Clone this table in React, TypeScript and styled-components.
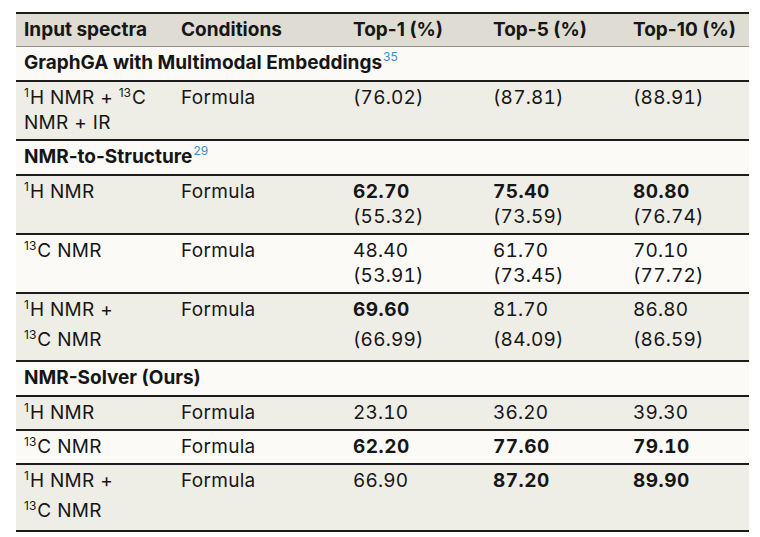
import React from "react";
import styled, { createGlobalStyle } from "styled-components";

const GlobalStyle = createGlobalStyle`
  html, body { margin: 0; padding: 0; background: #ffffff; }
  body { font-family: Inter, "Noto Sans", "Liberation Sans", sans-serif; color: #161616; }
`;

const Page = styled.div`
  padding: 12px 11px 0 16px;
`;

const Table = styled.div`
  width: 733px;
  border-top: 2px solid #1c1c1c;
  font-size: 19px;
`;

const COLS = "157px 172px 140px 140px 1fr";

const HeaderRow = styled.div`
  display: grid;
  grid-template-columns: ${COLS};
  background: #dedcd3;
  border-bottom: 1px solid #8f8e88;
  font-weight: 700;
`;

const SectionRow = styled.div`
  background: #fbfaf7;
  border-bottom: 2px solid #1c1c1c;
  font-weight: 700;
  padding: 4px 8px 5px;
  line-height: 24px;
  white-space: nowrap;
`;

const DataRow = styled.div<{ $shade: boolean; $tail: number }>`
  display: grid;
  grid-template-columns: ${COLS};
  background: ${(p) => (p.$shade ? "#eeede6" : "#fbfaf7")};
  border-bottom: 2px solid #1c1c1c;
  padding-bottom: ${(p) => p.$tail}px;
`;

const Cell = styled.div`
  padding: 3px 8px 4px;
  line-height: 25px;
`;

const HeadCell = styled.div`
  padding: 4px 8px 4px;
  line-height: 24px;
  white-space: nowrap;
`;

const Line = styled.div<{ $drop?: boolean }>`
  letter-spacing: 0.3px;
  padding-top: ${(p) => (p.$drop ? 5 : 0)}px;
  white-space: nowrap;
`;

const Num = styled.div<{ $bold?: boolean; $drop?: boolean }>`
  font-weight: ${(p) => (p.$bold ? 700 : 400)};
  font-variant-numeric: tabular-nums;
  letter-spacing: ${(p) => (p.$bold ? "0.5px" : "0.2px")};
  padding-top: ${(p) => (p.$drop ? 5 : 0)}px;
  white-space: nowrap;
`;

const Iso = styled.sup`
  font-size: 12px;
  letter-spacing: 0;
  line-height: 0;
  vertical-align: 0;
  position: relative;
  top: -7px;
  margin-right: 1px;
`;

const Ref = styled.sup`
  font-size: 12px;
  line-height: 0;
  vertical-align: 0;
  position: relative;
  top: -8px;
  font-weight: 400;
  color: #3a8ccb;
  margin-left: 1px;
`;

const H1 = () => (
  <>
    <Iso>1</Iso>H
  </>
);
const C13 = () => (
  <>
    <Iso>13</Iso>C
  </>
);

type Val = { t: string; b?: boolean };
type Row = {
  spectra: React.ReactNode[];
  drop?: boolean;
  shade: boolean;
  tail?: number;
  vals: Val[][];
};
type Section = { title: string; ref?: string; rows: Row[] };

const sections: Section[] = [
  {
    title: "GraphGA with Multimodal Embeddings",
    ref: "35",
    rows: [
      {
        spectra: [
          <>
            <H1 /> NMR + <C13 />
          </>,
          <>NMR + IR</>,
        ],
        shade: true,
        vals: [[{ t: "(76.02)" }], [{ t: "(87.81)" }], [{ t: "(88.91)" }]],
      },
    ],
  },
  {
    title: "NMR-to-Structure",
    ref: "29",
    rows: [
      {
        spectra: [
          <>
            <H1 /> NMR
          </>,
        ],
        shade: true,
        vals: [
          [{ t: "62.70", b: true }, { t: "(55.32)" }],
          [{ t: "75.40", b: true }, { t: "(73.59)" }],
          [{ t: "80.80", b: true }, { t: "(76.74)" }],
        ],
      },
      {
        spectra: [
          <>
            <C13 /> NMR
          </>,
        ],
        shade: false,
        vals: [
          [{ t: "48.40" }, { t: "(53.91)" }],
          [{ t: "61.70" }, { t: "(73.45)" }],
          [{ t: "70.10" }, { t: "(77.72)" }],
        ],
      },
      {
        spectra: [
          <>
            <H1 /> NMR +
          </>,
          <>
            <C13 /> NMR
          </>,
        ],
        drop: true,
        shade: true,
        tail: 4,
        vals: [
          [{ t: "69.60", b: true }, { t: "(66.99)" }],
          [{ t: "81.70" }, { t: "(84.09)" }],
          [{ t: "86.80" }, { t: "(86.59)" }],
        ],
      },
    ],
  },
  {
    title: "NMR-Solver (Ours)",
    rows: [
      {
        spectra: [
          <>
            <H1 /> NMR
          </>,
        ],
        shade: true,
        vals: [[{ t: "23.10" }], [{ t: "36.20" }], [{ t: "39.30" }]],
      },
      {
        spectra: [
          <>
            <C13 /> NMR
          </>,
        ],
        shade: false,
        vals: [
          [{ t: "62.20", b: true }],
          [{ t: "77.60", b: true }],
          [{ t: "79.10", b: true }],
        ],
      },
      {
        spectra: [
          <>
            <H1 /> NMR +
          </>,
          <>
            <C13 /> NMR
          </>,
        ],
        drop: true,
        shade: true,
        tail: 3,
        vals: [
          [{ t: "66.90" }],
          [{ t: "87.20", b: true }],
          [{ t: "89.90", b: true }],
        ],
      },
    ],
  },
];

const headers = ["Input spectra", "Conditions", "Top-1 (%)", "Top-5 (%)", "Top-10 (%)"];

export default function App() {
  return (
    <>
      <GlobalStyle />
      <Page>
        <Table>
          <HeaderRow>
            {headers.map((h) => (
              <HeadCell key={h}>{h}</HeadCell>
            ))}
          </HeaderRow>
          {sections.map((s) => (
            <React.Fragment key={s.title}>
              <SectionRow>
                {s.title}
                {s.ref && <Ref>{s.ref}</Ref>}
              </SectionRow>
              {s.rows.map((r, i) => (
                <DataRow key={i} $shade={r.shade} $tail={r.tail ?? 0}>
                  <Cell>
                    {r.spectra.map((l, j) => (
                      <Line key={j} $drop={r.drop && j > 0}>
                        {l}
                      </Line>
                    ))}
                  </Cell>
                  <Cell>
                    <Line>Formula</Line>
                  </Cell>
                  {r.vals.map((col, k) => (
                    <Cell key={k}>
                      {col.map((v, j) => (
                        <Num key={j} $bold={v.b} $drop={r.drop && j > 0}>
                          {v.t}
                        </Num>
                      ))}
                    </Cell>
                  ))}
                </DataRow>
              ))}
            </React.Fragment>
          ))}
        </Table>
      </Page>
    </>
  );
}
